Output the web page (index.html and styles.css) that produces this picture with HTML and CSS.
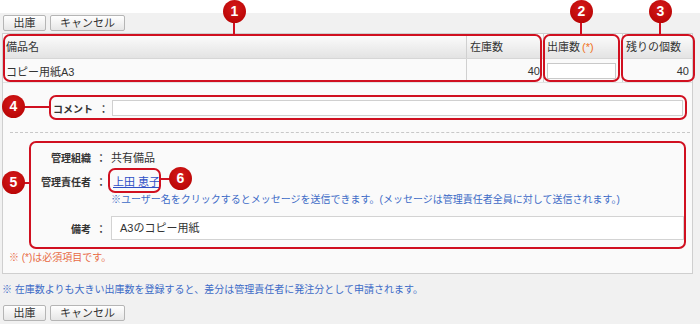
FILE: index.html
```html
<!DOCTYPE html>
<html lang="ja">
<head>
    <meta charset="UTF-8">
    <title>備品の出庫</title>
    <link rel="stylesheet" href="styles.css">
</head>
<body>
<div class="page">
    <div class="top-strip"></div>

    <div class="toolbar">
        <button class="btn btn-short">出庫</button>
        <button class="btn btn-long">キャンセル</button>
    </div>

    <div class="panel">
        <table class="items">
            <thead>
                <tr>
                    <th class="col-name">備品名</th>
                    <th class="col-stock">在庫数</th>
                    <th class="col-out">出庫数<span class="req">(*)</span></th>
                    <th class="col-rest">残りの個数</th>
                </tr>
            </thead>
            <tbody>
                <tr>
                    <td>コピー用紙A3</td>
                    <td class="num">40</td>
                    <td class="qty-cell"><input type="text" class="qty"></td>
                    <td class="num">40</td>
                </tr>
            </tbody>
        </table>

        <div class="comment-row">
            <label class="comment-label" for="comment">コメント</label>
            <span class="colon">：</span>
            <input type="text" id="comment" class="comment">
        </div>

        <div class="divider"></div>

        <div class="info">
            <div class="info-row">
                <span class="info-label">管理組織</span>
                <span class="colon">：</span>
                <span class="info-value">共有備品</span>
            </div>
            <div class="info-row">
                <span class="info-label">管理責任者</span>
                <span class="colon">：</span>
                <span class="info-value"><a href="#" class="user-link">上田 恵子</a></span>
            </div>
            <div class="info-hint">※ユーザー名をクリックするとメッセージを送信できます。(メッセージは管理責任者全員に対して送信されます。)</div>
            <div class="info-row info-row-input">
                <span class="info-label">備考</span>
                <span class="colon">：</span>
                <div class="memo">A3のコピー用紙</div>
            </div>
        </div>

        <p class="required">※ (*)は必須項目です。</p>
    </div>

    <p class="notice">※ 在庫数よりも大きい出庫数を登録すると、差分は管理責任者に発注分として申請されます。</p>

    <div class="toolbar toolbar-bottom">
        <button class="btn btn-short">出庫</button>
        <button class="btn btn-long">キャンセル</button>
    </div>

    <!-- callouts -->
    <div class="box box-1"></div>
    <div class="box box-2"></div>
    <div class="box box-3"></div>
    <div class="box box-4"></div>
    <div class="box box-5"></div>
    <div class="box box-6"></div>

    <div class="line line-v line-1"></div>
    <div class="line line-v line-2"></div>
    <div class="line line-v line-3"></div>
    <div class="line line-h line-4"></div>
    <div class="line line-h line-5"></div>
    <div class="line line-h line-6"></div>

    <div class="badge badge-1">1</div>
    <div class="badge badge-2">2</div>
    <div class="badge badge-3">3</div>
    <div class="badge badge-4">4</div>
    <div class="badge badge-5">5</div>
    <div class="badge badge-6">6</div>
</div>
</body>
</html>
```

FILE: styles.css
```css
body {
    margin: 0;
    background-color: #f1f1f1;
    font-family: "Liberation Sans", "Noto Sans CJK JP", sans-serif;
    font-size: 11px;
    color: #333;
}
.page {
    position: relative;
    width: 700px;
    height: 324px;
    overflow: hidden;
}
.top-strip {
    height: 13px;
    background-color: #fff;
}
.toolbar {
    display: flex;
    gap: 4px;
    padding: 2px 0 0 3px;
}
.btn {
    height: 16px;
    padding: 0;
    border: 1px solid #b5b5b5;
    border-radius: 2px;
    background: linear-gradient(#ffffff, #e6e6e6);
    font-family: inherit;
    font-size: 11px;
    line-height: 14px;
    color: #333;
}
.btn-short {
    width: 43px;
}
.btn-long {
    width: 75px;
}
.panel {
    margin: 2px 7px 0 2px;
    border: 1px solid #cfcfcf;
    background-color: #fafafa;
}
.items {
    width: 100%;
    border-collapse: collapse;
    table-layout: fixed;
}
.items th {
    height: 24px;
    padding: 0 3px;
    text-align: left;
    font-weight: normal;
    background: linear-gradient(#fdfdfd, #e3e3e3);
    border-bottom: 1px solid #d6d6d6;
}
.items td {
    height: 23px;
    padding: 0 3px;
    border-bottom: 1px solid #e2e2e2;
}
.items th + th, .items td + td {
    border-left: 1px solid #d0d0d0;
}
.col-name {
    width: 457px;
}
.col-stock {
    width: 70px;
}
.col-out {
    width: 72px;
}
.req {
    margin-left: 2px;
    color: #f07020;
}
.num {
    text-align: right;
}
.qty-cell {
    padding: 0 4px;
}
.qty {
    display: block;
    box-sizing: border-box;
    width: 69px;
    height: 16px;
    border: 1px solid #c9c9c9;
    background-color: #fff;
}
.comment-row {
    display: flex;
    align-items: center;
    height: 24px;
    margin-top: 13px;
    padding-left: 50px;
}
.comment-label {
    width: 42px;
    white-space: nowrap;
    font-size: 10px;
    font-weight: bold;
}
.colon {
    width: 17px;
    text-align: center;
    font-size: 10px;
    font-weight: bold;
}
.comment {
    box-sizing: border-box;
    width: 571px;
    height: 16px;
    border: 1px solid #d0d0d0;
    background-color: #fff;
}
.divider {
    margin: 12px 2px 0 7px;
    border-top: 1px dashed #c8c8c8;
}
.info {
    margin-top: 8px;
    padding-top: 4px;
}
.info-row {
    display: flex;
    align-items: center;
    height: 24px;
}
.info-label {
    width: 88px;
    text-align: right;
    white-space: nowrap;
    font-size: 10px;
    font-weight: bold;
}
.info-row .colon {
    width: 20px;
}
.user-link {
    color: #2f4fc6;
    padding-left: 2px;
}
.info-hint {
    height: 13px;
    padding-left: 108px;
    font-size: 10px;
    line-height: 13px;
    color: #3d6bc7;
}
.info-row-input {
    margin-top: 10px;
}
.memo {
    box-sizing: border-box;
    width: 573px;
    height: 24px;
    padding-left: 8px;
    line-height: 22px;
    border: 1px solid #d3d3d3;
    background-color: #fff;
}
.required {
    margin: 9px 0 0 6px;
    height: 24px;
    font-size: 10px;
    color: #e86b45;
}
.notice {
    margin: 9px 0 0 2px;
    font-size: 10px;
    line-height: 14px;
    color: #3d6bc7;
}
.toolbar-bottom {
    padding-top: 8px;
}

/* callouts */
.box {
    position: absolute;
    box-sizing: border-box;
    border: 2px solid #d01020;
    border-radius: 7px;
}
.box-1 { left: 3px; top: 34px; width: 539px; height: 48px; }
.box-2 { left: 543px; top: 34px; width: 77px; height: 48px; }
.box-3 { left: 621px; top: 34px; width: 74px; height: 48px; }
.box-4 { left: 49px; top: 95px; width: 638px; height: 25px; }
.box-5 { left: 29px; top: 141px; width: 657px; height: 108px; }
.box-6 { left: 108px; top: 168px; width: 53px; height: 25px; }
.line {
    position: absolute;
    background-color: #d01020;
}
.line-v { width: 2px; top: 20px; height: 15px; }
.line-h { height: 2px; }
.line-1 { left: 233px; }
.line-2 { left: 580px; }
.line-3 { left: 659px; }
.line-4 { left: 22px; top: 106px; width: 28px; }
.line-5 { left: 22px; top: 182px; width: 8px; }
.line-6 { left: 160px; top: 178px; width: 10px; }
.badge {
    position: absolute;
    width: 23px;
    height: 23px;
    border-radius: 50%;
    background: radial-gradient(circle at 50% 35%, #d41a1a, #b30000);
    color: #fff;
    font-family: "Liberation Sans", sans-serif;
    font-weight: bold;
    font-size: 14px;
    line-height: 23px;
    text-align: center;
}
.badge-1 { left: 223px; top: 0; }
.badge-2 { left: 570px; top: 0; }
.badge-3 { left: 649px; top: 0; }
.badge-4 { left: 2px; top: 95px; }
.badge-5 { left: 2px; top: 171px; }
.badge-6 { left: 169px; top: 167px; }
```
